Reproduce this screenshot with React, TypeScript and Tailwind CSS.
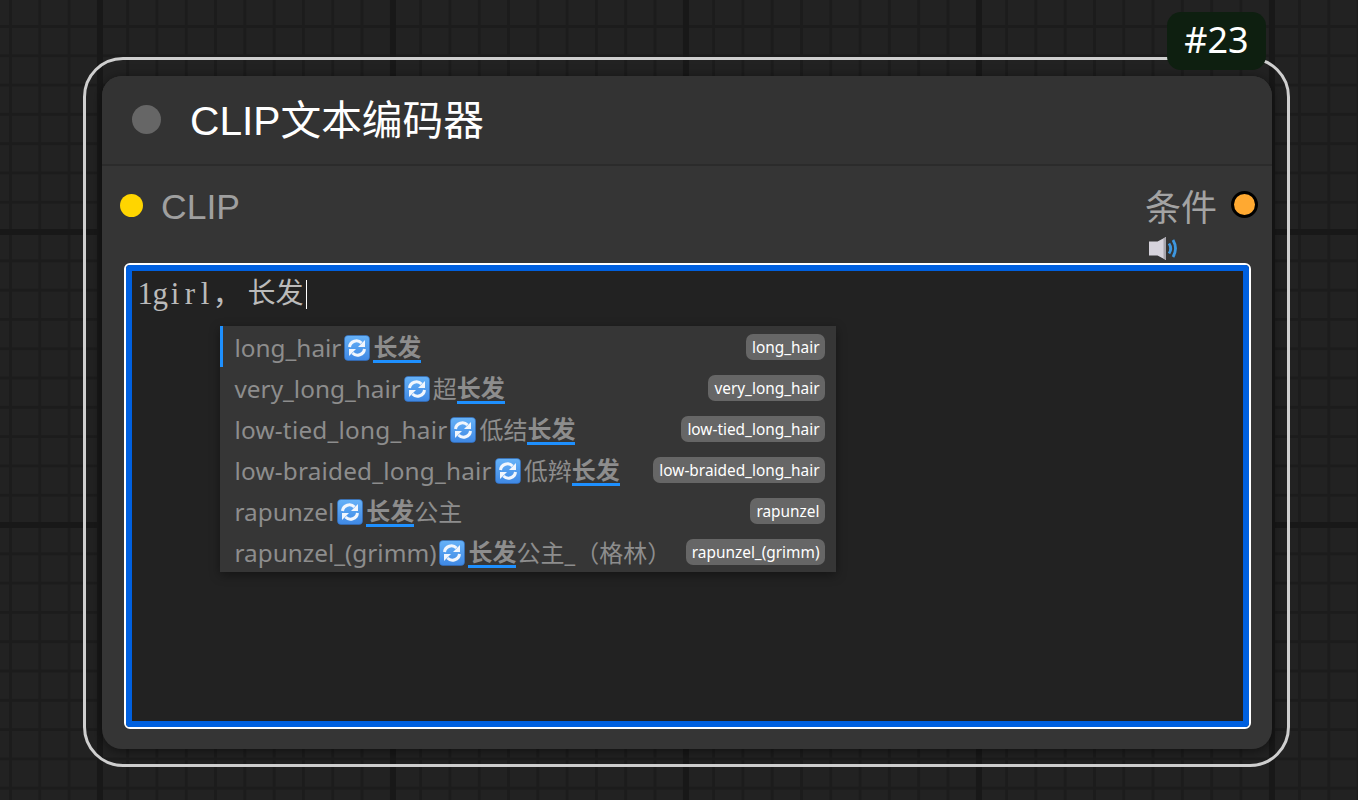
const rows = [
  { tag: 'long_hair', before: '', after: '', track: '' },
  { tag: 'very_long_hair', before: '超', after: '', track: '' },
  { tag: 'low-tied_long_hair', before: '低结', after: '', track: 'tracking-[0.22px]' },
  { tag: 'low-braided_long_hair', before: '低辫', after: '', track: 'tracking-[0.19px]' },
  { tag: 'rapunzel', before: '', after: '公主', track: '' },
  { tag: 'rapunzel_(grimm)', before: '', after: '公主_（格林）', track: '' },
];

function SwapIcon() {
  return (
    <svg width="26" height="26" viewBox="0 0 26 26" className="shrink-0 mx-[3px]">
      <defs>
        <linearGradient id="swap-bg" x1="0" y1="0" x2="0" y2="1">
          <stop offset="0" stopColor="#66b2f8" />
          <stop offset="1" stopColor="#3f88e4" />
        </linearGradient>
      </defs>
      <rect x="0.5" y="0.5" width="25" height="25" rx="3.5" fill="url(#swap-bg)" stroke="#2f6fc4" strokeWidth="0.6" />
      <path d="M5.500 12a7 7 0 0 1 12-4" fill="none" stroke="#f1f6fd" strokeWidth="3" />
      <path d="M21 5v7h-7z" fill="#f1f6fd" />
      <path d="M20.500 14a7 7 0 0 1-12 4" fill="none" stroke="#f1f6fd" strokeWidth="3" />
      <path d="M5 21v-7h7z" fill="#f1f6fd" />
    </svg>
  );
}

function SpeakerIcon() {
  return (
    <svg width="30" height="24" viewBox="0 0 30 24" className="block blur-[0.5px]">
      <path d="M0 4.500h8.500L17 0v23l-8.500-4.500H0z" fill="#d6d3dc" />
      <path d="M14.500 1.500L17 0v23l-2.500-1.500z" fill="#a8a6ae" />
      <path d="M20 6.500q3.500 5 0 10" fill="none" stroke="#3d97e0" strokeWidth="2.800" />
      <path d="M24 3q5 8.500 0 17" fill="none" stroke="#3d97e0" strokeWidth="2.800" />
    </svg>
  );
}

export default function App() {
  return (
    <div className="w-[1358px] h-[800px] overflow-hidden bg-[#222222] bg-[linear-gradient(to_right,#181818_6px,transparent_6px),linear-gradient(to_bottom,#181818_6px,transparent_6px),linear-gradient(to_right,#1c1c1c_3px,transparent_3px),linear-gradient(to_bottom,#1c1c1c_3px,transparent_3px)] bg-size-[293px_293px,293px_293px,29.3px_29.3px,29.3px_29.3px] bg-position-[97px_0,0_229px,9px_0,0_25px] pt-[57px] pl-[83px] font-['Liberation_Sans','Noto_Sans_CJK_SC',sans-serif]">
      <div className="relative flex w-[1207px] h-[710px] rounded-[40px] border-[3px] border-[#cfcfcf] pt-[16px] pb-[15px] pl-[16px] pr-[15px]">
        <div className="absolute -top-[48px] right-[21px] flex h-[58px] w-[99px] items-center justify-center rounded-[14px] bg-[#0e1f10] pb-[2px] font-['Noto_Sans','Noto_Sans_CJK_SC',sans-serif] text-[36px] text-white">
          #23
        </div>

        <div className="flex flex-1 flex-col rounded-[20px] bg-[#353535] shadow-[0_2px_12px_rgba(0,0,0,0.5)]">
          <div className="flex h-[90px] shrink-0 items-center gap-[29px] rounded-t-[20px] border-b-2 border-[#2b2b2b] bg-[#333333] pl-[30px]">
            <div className="mb-[2px] h-[29px] w-[29px] rounded-full bg-[#666666]" />
            <div className="pt-[2px] text-[40.7px] leading-none text-white">CLIP文本编码器</div>
          </div>

          <div className="flex h-[97px] shrink-0 justify-between pl-[18px] pr-[14px]">
            <div className="flex h-[80px] items-center gap-[18px]">
              <div className="mb-[2px] h-[23px] w-[23px] rounded-full bg-[#ffd500]" />
              <div className="pt-[4px] text-[35.5px] leading-none text-[#9f9f9f]">CLIP</div>
            </div>
            <div className="flex flex-col items-start">
              <div className="flex h-[78px] items-center gap-[14px]">
                <div className="pt-[8px] text-[36px] leading-none text-[#a3a3a3]">条件</div>
                <div className="mb-[1px] h-[27px] w-[27px] rounded-full border-[3px] border-black bg-[#ffa931]" />
              </div>
              <div className="-mt-[7px] ml-[4px]">
                <SpeakerIcon />
              </div>
            </div>
          </div>

          <div className="relative mx-auto flex h-[466px] w-[1127px] flex-col rounded-[6px] border-2 border-white bg-[#222222] outline-[6px] -outline-offset-[8px] outline-[#0060df]">
            <div className="flex items-center pl-[12px] pt-[12px] leading-[34px] text-[#bbbbbb]">
              <span className="flex font-['Liberation_Serif',serif] text-[31px]">
                {'1girl'.split('').map((c, i) => (
                  <span key={i} className="w-[15px] text-center">{c}</span>
                ))}
              </span>
              <span className="w-[35px] text-[30px]">，</span>
              <span className="text-[28px]">长发</span>
              <span className="ml-[2px] h-[29px] w-[1.5px] bg-white" />
            </div>

            <div className="absolute left-[94px] top-[61px] w-[616px] bg-[#363636] font-['Noto_Sans','Noto_Sans_CJK_SC',sans-serif] shadow-[0_3px_10px_rgba(0,0,0,0.4)]">
              {rows.map((row, i) => (
                <div
                  key={row.tag}
                  className={`flex h-[41px] items-center justify-between pr-[11px] text-[24.35px] text-[#8d8d8d] ${i === 0 ? 'border-l-[3px] border-[#1e90ff] pl-[12px]' : 'pl-[15px]'}`}
                >
                  <div className="flex items-center whitespace-nowrap pt-[3px]">
                    <span className={row.track}>{row.tag}</span>
                    <SwapIcon />
                    <span className="text-[24px]">{row.before}</span>
                    <span className="border-b-[3px] border-[#1e90ff] pt-[2px] text-[24px] font-bold leading-[26px]">长发</span>
                    <span className="text-[24px]">{row.after}</span>
                  </div>
                  <div className="flex h-[26px] items-center rounded-[7px] bg-[#666666] pl-[6px] pr-[5px] pt-[3px] text-[15.4px] text-white">
                    {row.tag}
                  </div>
                </div>
              ))}
            </div>
          </div>
        </div>
      </div>
    </div>
  );
}
